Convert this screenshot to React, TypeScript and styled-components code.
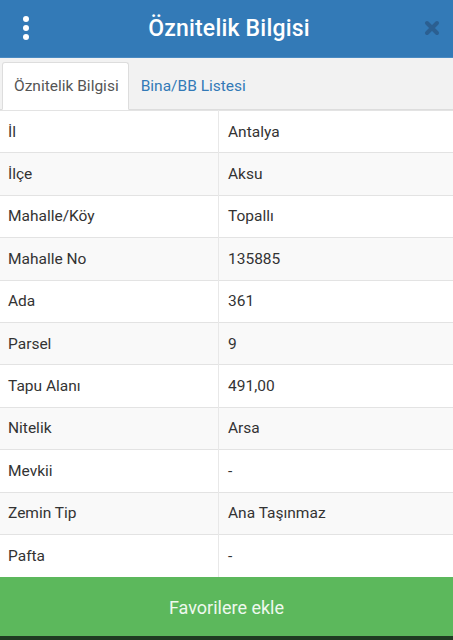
import React from "react";
import styled, { createGlobalStyle } from "styled-components";

const GlobalStyle = createGlobalStyle`
  html, body {
    margin: 0;
    padding: 0;
    background: #ffffff;
  }
  body {
    font-family: Roboto, "Liberation Sans", Arial, sans-serif;
    color: #333333;
  }
`;

const rows: [string, string][] = [
  ["İl", "Antalya"],
  ["İlçe", "Aksu"],
  ["Mahalle/Köy", "Topallı"],
  ["Mahalle No", "135885"],
  ["Ada", "361"],
  ["Parsel", "9"],
  ["Tapu Alanı", "491,00"],
  ["Nitelik", "Arsa"],
  ["Mevkii", "-"],
  ["Zemin Tip", "Ana Taşınmaz"],
  ["Pafta", "-"],
];

const App = () => {
  return (
    <>
      <GlobalStyle />
      <Page>
        <Header>
          <MenuButton aria-label="menu">
            <Dot />
            <Dot />
            <Dot />
          </MenuButton>
          <Title>Öznitelik Bilgisi</Title>
          <CloseButton aria-label="close">
            <svg width="16" height="16" viewBox="0 0 16 16">
              <path
                d="M3 3 L13 13 M13 3 L3 13"
                stroke="#2b5f91"
                strokeWidth="4"
                strokeLinecap="round"
              />
            </svg>
          </CloseButton>
        </Header>

        <Tabs>
          <Tab $active>Öznitelik Bilgisi</Tab>
          <Tab>Bina/BB Listesi</Tab>
        </Tabs>

        <Table>
          <tbody>
            {rows.map(([label, value], i) => (
              <Row key={label} $striped={i % 2 === 1}>
                <Cell>{label}</Cell>
                <Cell>{value}</Cell>
              </Row>
            ))}
          </tbody>
        </Table>

        <FavButton>Favorilere ekle</FavButton>
        <BottomStrip />
      </Page>
    </>
  );
};

const Page = styled.div`
  width: 453px;
  height: 640px;
  display: flex;
  flex-direction: column;
  overflow: hidden;
  background: #ffffff;
`;

const Header = styled.div`
  height: 58px;
  flex-shrink: 0;
  background: #337ab7;
  border-bottom: 1px solid #4a8ac2;
  box-sizing: border-box;
  display: flex;
  align-items: center;
  justify-content: space-between;
  padding: 0 8px 0 18px;
`;

const MenuButton = styled.div`
  width: 16px;
  display: flex;
  flex-direction: column;
  align-items: center;
  gap: 3px;
  margin-top: -1px;
`;

const Dot = styled.span`
  width: 6px;
  height: 6px;
  border-radius: 50%;
  background: #ffffff;
`;

const Title = styled.h1`
  margin: 0;
  font-size: 23px;
  font-weight: 500;
  color: #ffffff;
  letter-spacing: 0.2px;
  padding-left: 2px;
`;

const CloseButton = styled.div`
  width: 20px;
  height: 20px;
  display: flex;
  align-items: center;
  justify-content: center;
  margin-top: -2px;
  margin-right: 3px;
`;

const Tabs = styled.div`
  height: 52px;
  flex-shrink: 0;
  box-sizing: border-box;
  background: #f2f2f2;
  border-bottom: 1px solid #dddddd;
  display: flex;
  align-items: flex-end;
  padding-left: 2px;
`;

const Tab = styled.div<{ $active?: boolean }>`
  height: 48px;
  box-sizing: border-box;
  display: flex;
  align-items: center;
  padding: 0 9px 0 11px;
  font-size: 15.5px;
  margin-bottom: -1px;
  color: ${(p) => (p.$active ? "#555555" : "#337ab7")};
  background: ${(p) => (p.$active ? "#ffffff" : "transparent")};
  border: 1px solid ${(p) => (p.$active ? "#dddddd" : "transparent")};
  border-bottom-color: ${(p) => (p.$active ? "#ffffff" : "transparent")};
  border-radius: 3px 3px 0 0;
`;

const Table = styled.table`
  width: 100%;
  border-collapse: collapse;
  flex-shrink: 0;
`;

const Row = styled.tr<{ $striped: boolean }>`
  height: 42.4px;
  background: ${(p) => (p.$striped ? "#f9f9f9" : "#ffffff")};
`;

const Cell = styled.td`
  padding: 0 8px;
  font-size: 15.5px;
  color: #333333;
  border-top: 1px solid #e3e3e3;
  vertical-align: middle;

  &:first-child {
    width: 202px;
    border-right: 1px solid #e8e8e8;
  }

  &:last-child {
    padding-left: 9px;
  }
`;

const FavButton = styled.div`
  flex: 1;
  background: #5cb85c;
  color: #eef8ee;
  font-size: 18px;
  display: flex;
  align-items: center;
  justify-content: center;
  padding-top: 3px;
`;

const BottomStrip = styled.div`
  height: 4px;
  flex-shrink: 0;
  background: #1f3a22;
`;

export default App;
